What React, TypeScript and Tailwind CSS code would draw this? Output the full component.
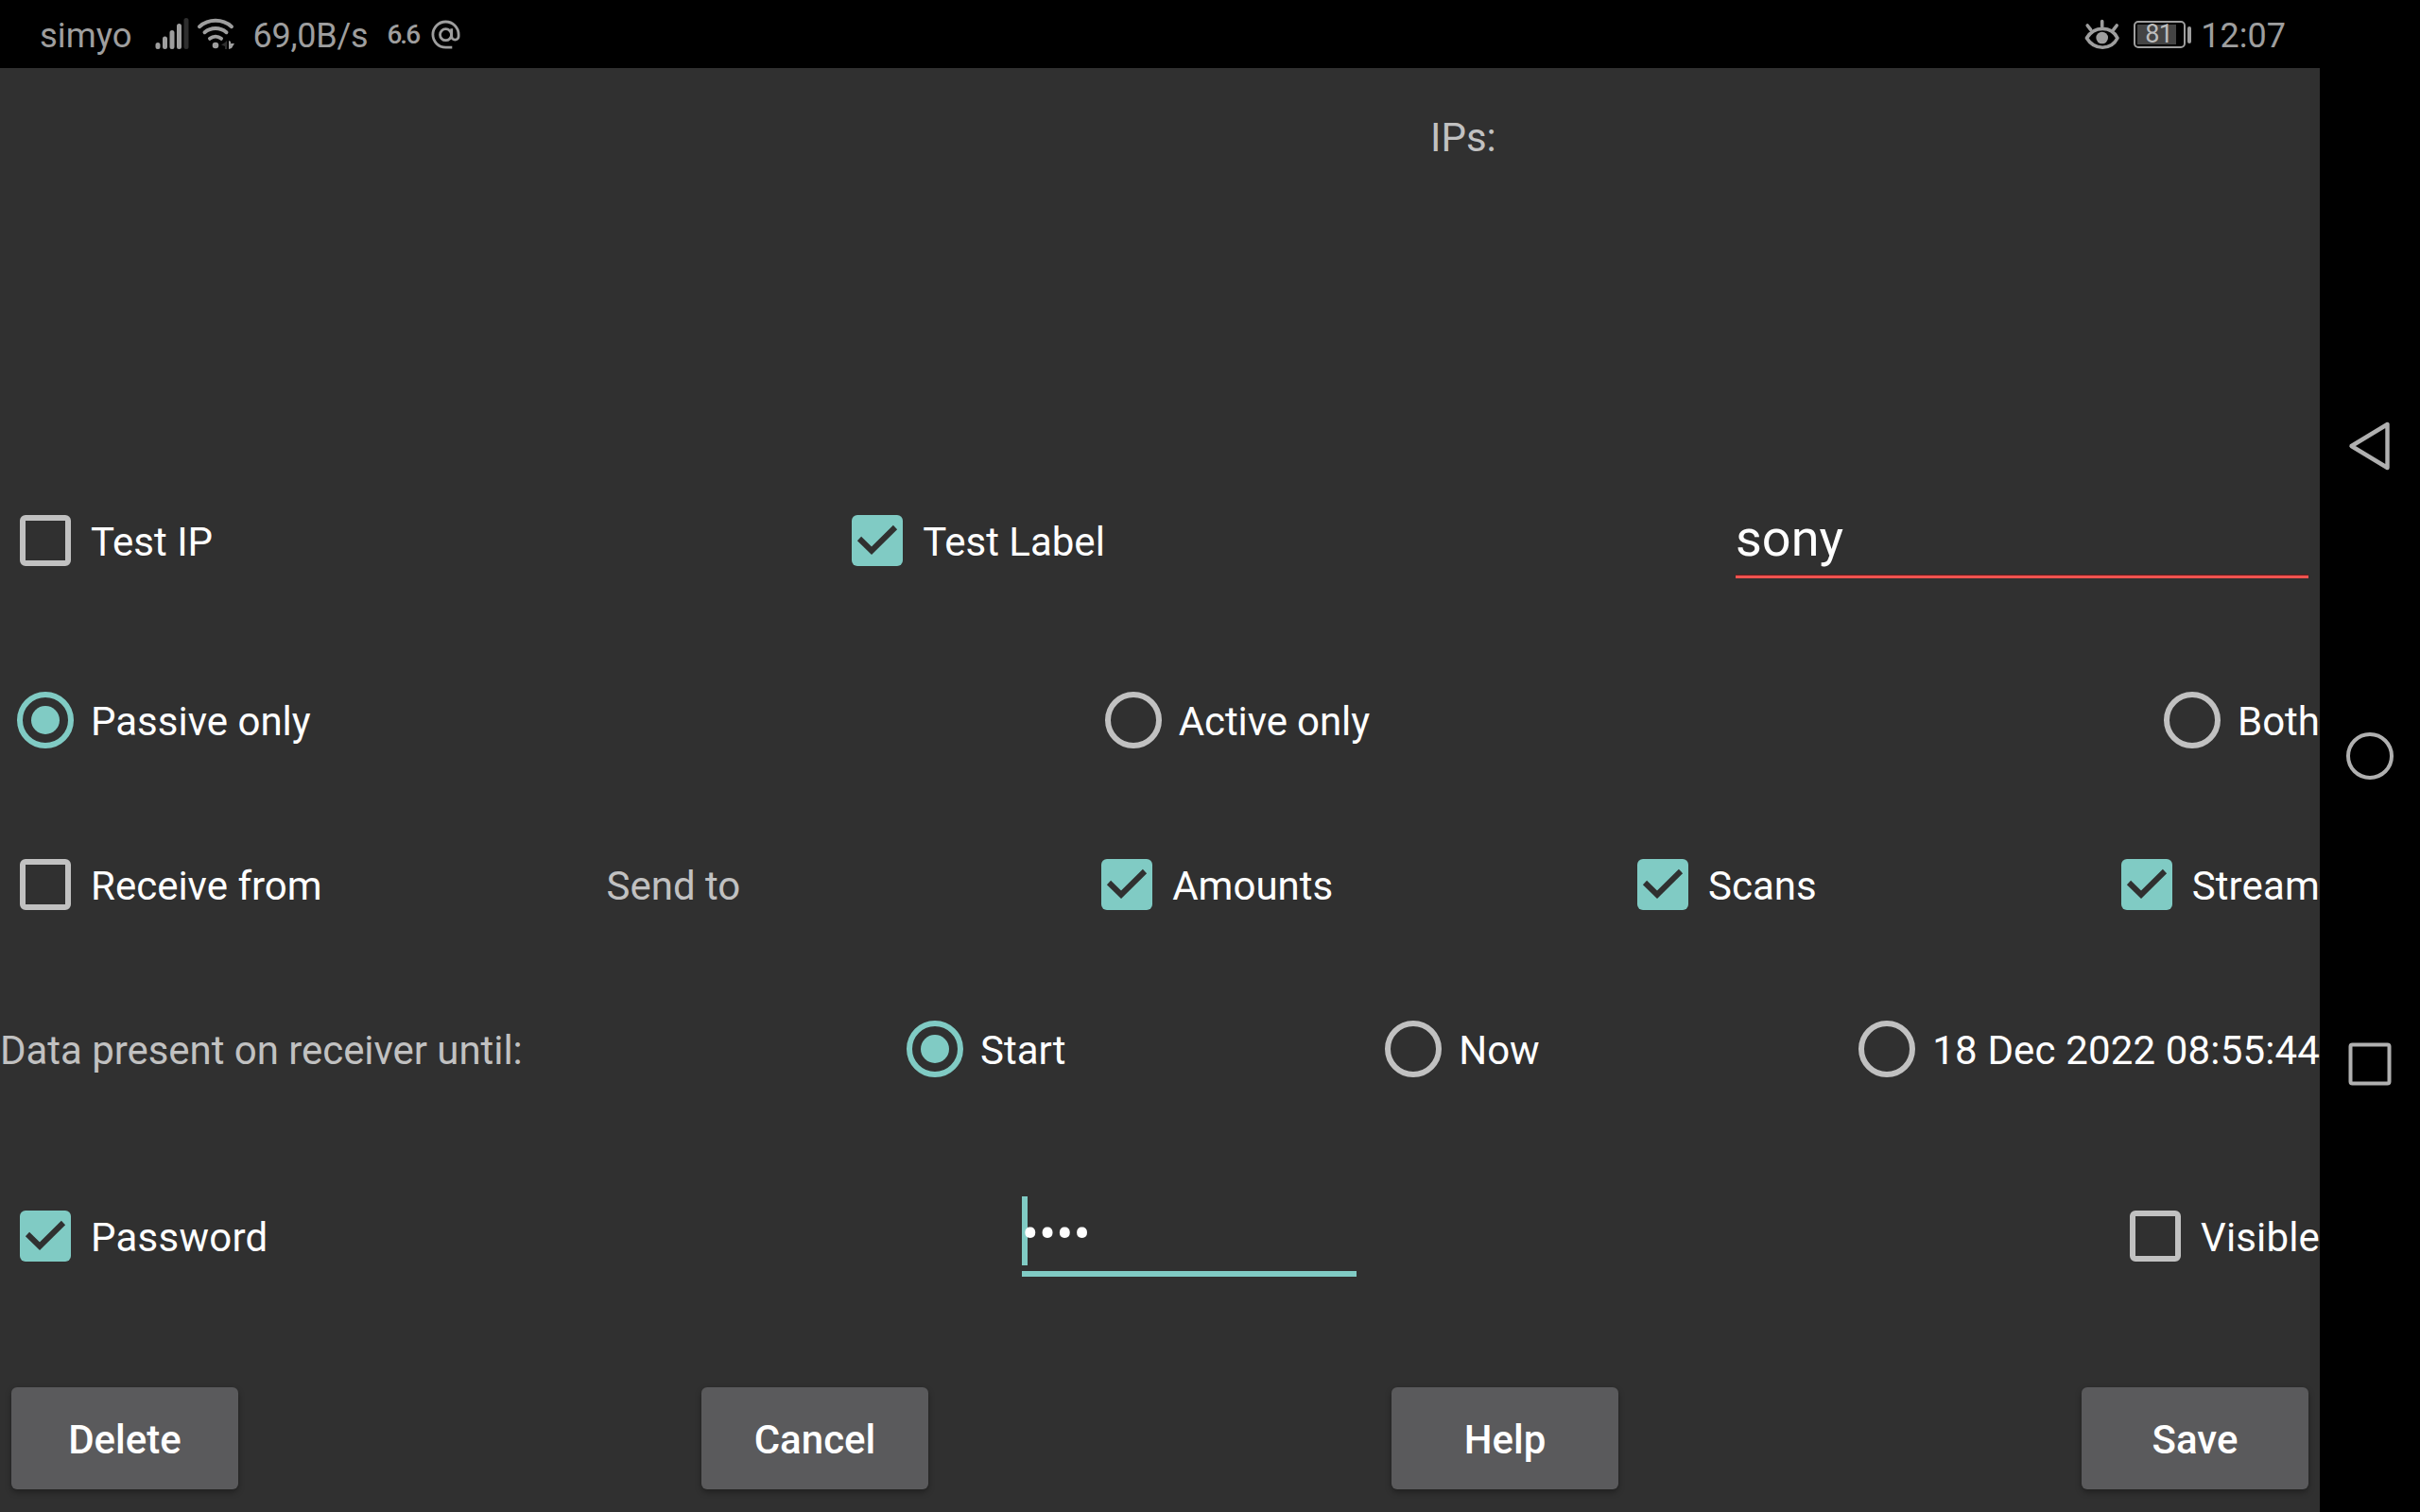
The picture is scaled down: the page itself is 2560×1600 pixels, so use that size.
import React from "react";

const CheckBox = ({ on }: { on?: boolean }) => (
  <svg className="shrink-0" width="96" height="96" viewBox="0 0 96 96">
    {on ? (
      <>
        <rect x="21" y="21" width="54" height="54" rx="6" fill="#80cbc4" />
        <path d="M29 46 L42 58.7 L67 34" fill="none" stroke="#303030" strokeWidth="6" />
      </>
    ) : (
      <rect x="24" y="24" width="48" height="48" rx="3" fill="none" stroke="#c1c1c1" strokeWidth="6" />
    )}
  </svg>
);

const Radio = ({ on }: { on?: boolean }) => (
  <svg className="shrink-0" width="96" height="96" viewBox="0 0 96 96">
    <circle cx="48" cy="48" r="27" fill="none" stroke={on ? "#80cbc4" : "#c1c1c1"} strokeWidth="6" />
    {on && <circle cx="48" cy="48" r="15" fill="#80cbc4" />}
  </svg>
);

const Option = ({ kind, on, label, spacing = "" }: { kind: "check" | "radio"; on?: boolean; label: string; spacing?: string }) => (
  <label className="flex h-24 items-center whitespace-nowrap text-white">
    {kind === "check" ? <CheckBox on={on} /> : <Radio on={on} />}
    <span className={`pt-0.5 ${spacing}`}>{label}</span>
  </label>
);

const Button = ({ label }: { label: string }) => (
  <button className="h-[108px] w-60 rounded-[6px] bg-[#5a5a5c] pt-0.5 font-medium text-white shadow-[0_3px_6px_rgba(0,0,0,0.35)]">
    {label}
  </button>
);

const SignalIcon = () => (
  <svg className="ml-6 shrink-0" width="36" height="72" viewBox="0 0 36 72" strokeWidth="5" strokeLinecap="round">
    <path d="M3 47.5V49.5M10.5 41V49.5M18 34.5V49.5M25.5 27.5V49.5" stroke="#9e9e9e" />
    <path d="M33 21.5V49.5" stroke="#2e2e2e" />
  </svg>
);

const WifiIcon = () => (
  <svg className="ml-2 shrink-0" width="42" height="72" viewBox="0 0 42 72">
    <g fill="none" stroke="#9e9e9e" strokeWidth="4" strokeLinecap="round">
      <path d="M3 28.2A26 26 0 0 1 37 28.2" />
      <path d="M8.5 34.2A18 18 0 0 1 31.5 34.2" />
      <path d="M14 40.8A9.6 9.6 0 0 1 26 40.8" />
    </g>
    <circle cx="20" cy="48" r="3.3" fill="#9e9e9e" />
    <path d="M32 43V52H30V49L26 47.5L30 45Z" fill="#2e2e2e" />
    <path d="M34 43L36 44V46L40 46L37 51L34 52Z" fill="#9e9e9e" />
  </svg>
);

const AtIcon = () => (
  <svg className="ml-[13px] shrink-0" width="32" height="72" viewBox="0 0 32 72" fill="none" stroke="#9e9e9e" strokeWidth="2.8">
    <circle cx="15.5" cy="36.7" r="6" />
    <path d="M22.3 50.2H15.5A13.6 13.6 0 1 1 29.1 36.6V38.5A3.6 3.6 0 0 1 21.7 38.5V30.3" />
  </svg>
);

const EyeIcon = () => (
  <svg className="shrink-0" width="38" height="72" viewBox="0 0 38 72">
    <g fill="none" stroke="#9e9e9e" strokeWidth="3.6" strokeLinecap="round">
      <path d="M2.4 40.3C10.4 27 28.4 27 35 40.3C28.4 53.5 10.4 53.5 2.4 40.3Z" strokeLinejoin="round" />
      <path d="M18.7 22.5V28M3.2 27L6.6 31.4M34.2 27L30.8 31.4" />
    </g>
    <circle cx="18.7" cy="40" r="6.3" fill="#9e9e9e" />
  </svg>
);

const Battery = () => (
  <div className="ml-[14px] mt-[1px] flex items-center gap-0.5">
    <div className="flex h-[29px] w-[55px] rounded-[5px] border-2 border-[#9e9e9e] p-0.5">
      <div className="flex h-[21px] w-[41px] items-center justify-center bg-[#444444] pl-1 text-[27px] leading-none tracking-[-0.5px] text-[#bdbdbd]">
        <span>81</span>
      </div>
    </div>
    <div className="h-[18px] w-1 rounded-full bg-[#9e9e9e]" />
  </div>
);

const NavBar = () => (
  <nav className="flex w-[106px] flex-col items-center text-[#b0b0b0]">
    <svg className="mt-[442px]" width="60" height="60" viewBox="0 0 60 60" fill="none" stroke="currentColor" strokeWidth="4.4" strokeLinejoin="round">
      <path d="M10.5 30L48.5 7V53Z" />
    </svg>
    <svg className="mt-[268px]" width="60" height="60" viewBox="0 0 60 60" fill="none" stroke="currentColor" strokeWidth="4">
      <circle cx="30" cy="30" r="23" />
    </svg>
    <svg className="mt-[266px]" width="60" height="60" viewBox="0 0 60 60" fill="none" stroke="currentColor" strokeWidth="4">
      <rect x="9.5" y="9.5" width="41" height="41" rx="2" />
    </svg>
  </nav>
);

export default function App() {
  return (
    <div className="flex h-[1600px] w-[2560px] overflow-hidden bg-black font-['Roboto',sans-serif]">
      <div className="flex w-[2454px] flex-col">
        <header className="flex h-[72px] items-center justify-between pl-[42px] pr-9 text-[36px] leading-[44px] text-[#9e9e9e]">
          <div className="flex items-center">
            <span className="pt-[3px] text-[36.5px]">simyo</span>
            <SignalIcon />
            <WifiIcon />
            <span className="ml-[18px] pt-[3px] tracking-[-0.25px]">69,0B/s</span>
            <span className="ml-5 pt-0.5 text-[28px] font-medium tracking-[-2px]">6.6</span>
            <AtIcon />
          </div>
          <div className="flex items-center">
            <EyeIcon />
            <Battery />
            <span className="ml-2.5 pt-[3px]">12:07</span>
          </div>
        </header>
        <main className="flex flex-1 flex-col bg-[#303030] text-[42px] leading-[49px] text-[#c1c1c1]">
          <div className="h-[452px] pl-[1513px] pt-[49px]">IPs:</div>
          <div className="flex h-24 justify-between">
            <Option kind="check" label="Test IP" />
            <Option kind="check" on label="Test Label" />
            <div className="mx-3 h-[88px] w-[606px] border-b-[3px] border-[#ef5350] pt-[14px] text-[54px] leading-[63px] text-white shadow-[inset_0_-1px_0_#6b1a1c]">sony</div>
          </div>
          <div className="mt-[94px] flex justify-between">
            <Option kind="radio" on label="Passive only" />
            <Option kind="radio" label="Active only" spacing="tracking-[-0.1px]" />
            <Option kind="radio" label="Both" />
          </div>
          <div className="mt-[78px] flex items-center justify-between">
            <Option kind="check" label="Receive from" />
            <span className="pr-[60px] pt-0.5">Send to</span>
            <Option kind="check" on label="Amounts" />
            <Option kind="check" on label="Scans" />
            <Option kind="check" on label="Stream" spacing="tracking-[0.15px]" />
          </div>
          <div className="mt-[78px] flex items-center justify-between">
            <span className="whitespace-nowrap pt-0.5 tracking-[-0.05px]">Data present on receiver until:</span>
            <div className="flex w-[1513px] justify-between">
              <Option kind="radio" on label="Start" />
              <Option kind="radio" label="Now" />
              <Option kind="radio" label="18 Dec 2022 08:55:44" spacing="tracking-[0.15px]" />
            </div>
          </div>
          <div className="mt-[102px] flex h-24 justify-between">
            <Option kind="check" on label="Password" spacing="tracking-[0.25px]" />
            <div className="mx-3 flex h-[91px] w-[354px] border-b-[6px] border-[#80cbc4] pt-1.5">
              <div className="-mr-1.5 h-[73px] w-1.5 bg-[#80cbc4]" />
              <span className="relative text-[54px] leading-[79px] text-white">••••</span>
            </div>
            <Option kind="check" label="Visible" spacing="tracking-[0.15px]" />
          </div>
          <div className="mt-28 flex justify-between px-3">
            <Button label="Delete" />
            <Button label="Cancel" />
            <Button label="Help" />
            <Button label="Save" />
          </div>
        </main>
      </div>
      <NavBar />
    </div>
  );
}
